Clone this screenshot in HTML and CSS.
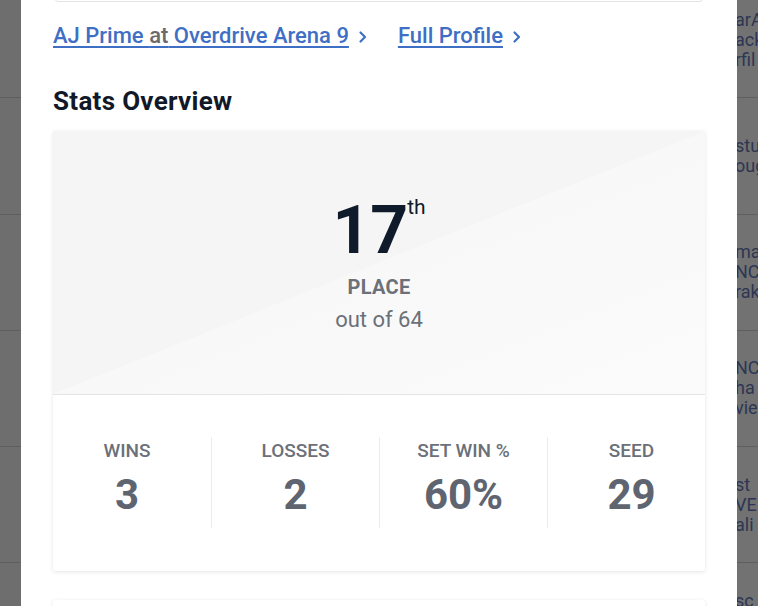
FILE: index.html
```html
<!DOCTYPE html>
<html>
<head>
<meta charset="utf-8">
<link rel="stylesheet" href="styles.css">
</head>
<body>
<div class="screen">
  <div class="side side-left">
    <div class="side-row"></div>
    <div class="side-row"></div>
    <div class="side-row"></div>
    <div class="side-row"></div>
    <div class="side-row"></div>
    <div class="side-row"></div>
  </div>
  <main class="panel">
    <div class="top-box"></div>
    <div class="links">
      <a class="link" href="#">AJ Prime <span class="muted">at</span> Overdrive Arena 9</a>
      <span class="chev">
        <svg width="10" height="14" viewBox="0 0 10 14"><path d="M2.5 2.5 L7 7 L2.5 11.5" fill="none" stroke="currentColor" stroke-width="2.2" stroke-linecap="round" stroke-linejoin="round"/></svg>
      </span>
      <a class="link link-profile" href="#">Full Profile</a>
      <span class="chev">
        <svg width="10" height="14" viewBox="0 0 10 14"><path d="M2.5 2.5 L7 7 L2.5 11.5" fill="none" stroke="currentColor" stroke-width="2.2" stroke-linecap="round" stroke-linejoin="round"/></svg>
      </span>
    </div>
    <h2 class="section-title">Stats Overview</h2>
    <section class="card">
      <div class="place">
        <div class="place-num"><span class="num">17</span><span class="suffix">th</span></div>
        <div class="place-label">PLACE</div>
        <div class="place-of">out of 64</div>
      </div>
      <div class="stats">
        <div class="stat">
          <div class="stat-label">WINS</div>
          <div class="stat-value">3</div>
        </div>
        <div class="stat">
          <div class="stat-label">LOSSES</div>
          <div class="stat-value">2</div>
        </div>
        <div class="stat">
          <div class="stat-label">SET WIN %</div>
          <div class="stat-value">60%</div>
        </div>
        <div class="stat">
          <div class="stat-label">SEED</div>
          <div class="stat-value">29</div>
        </div>
      </div>
    </section>
    <div class="card next-card"></div>
  </main>
  <div class="side side-right">
    <div class="side-row"><span>arAl</span><span>ack</span><span>rfil</span></div>
    <div class="side-row"><span>stu</span><span>oug</span></div>
    <div class="side-row"><span>ma</span><span>NC</span><span>rak</span></div>
    <div class="side-row"><span>NC</span><span>ha</span><span>vie</span></div>
    <div class="side-row"><span>st</span><span>VE</span><span>ali</span></div>
    <div class="side-row"><span>sc</span><span>ol</span><span>ne</span></div>
  </div>
</div>
</body>
</html>
```

FILE: styles.css
```css
* { box-sizing: border-box; }
html, body {
  margin: 0;
  padding: 0;
  width: 758px;
  height: 606px;
  overflow: hidden;
  font-family: Roboto, "Liberation Sans", Arial, sans-serif;
  background: #707070;
}
.screen {
  display: flex;
  width: 758px;
  height: 606px;
  overflow: hidden;
}
.side {
  width: 21px;
  flex: 0 0 21px;
  overflow: hidden;
  background: #6e6e6e;
}
.side-left .side-row,
.side-right .side-row {
  height: 116.25px;
  border-bottom: 1px solid #5f5f5f;
  display: flex;
  flex-direction: column;
  justify-content: center;
}
.side .side-row:first-child { margin-top: -18px; }
.side-right { background: #727272; flex-basis: 21px; }
.side-right .side-row span {
  display: block;
  font-size: 18px;
  line-height: 20px;
  color: #2d3652;
  white-space: nowrap;
  margin-left: -2px;
}
.panel {
  flex: 0 0 716px;
  width: 716px;
  background: #ffffff;
  padding: 0 32px;
  overflow: hidden;
}
.top-box {
  height: 40px;
  margin-top: -38px;
  border: 1px solid #e3e3e3;
  border-radius: 6px;
}
.links {
  display: flex;
  align-items: center;
  margin-top: 22px;
  height: 24px;
  line-height: 24px;
}
.link {
  font-size: 22px;
  font-weight: 500;
  color: #3f6fc4;
  text-decoration: underline;
  text-underline-offset: 3px;
  text-decoration-thickness: 1.5px;
}
.muted { color: #6b6b6b; }
.chev {
  display: inline-flex;
  color: #3f6fc4;
  margin-left: 9px;
  margin-top: 1px;
}
.link-profile { margin-left: 30px; }
.section-title {
  margin: 38px 0 0 0;
  font-size: 26px;
  line-height: 30px;
  font-weight: 700;
  color: #111827;
  letter-spacing: 0.3px;
}
.card {
  margin-top: 15px;
  background: #ffffff;
  border-radius: 2px;
  box-shadow: 0 1px 4px rgba(0, 0, 0, 0.10), 0 0 1px rgba(0, 0, 0, 0.06);
}
.place {
  height: 264px;
  padding-top: 67px;
  border-bottom: 1px solid #e4e4e4;
  background: linear-gradient(to bottom right, #f5f5f5 50%, #f8f8f8 50%, #fbfbfb 100%);
  text-align: center;
}
.place-num {
  display: flex;
  justify-content: center;
  align-items: flex-start;
  color: #0f1a2b;
}
.num {
  font-size: 66px;
  line-height: 66px;
  font-weight: 700;
}
.suffix {
  font-size: 21px;
  line-height: 20px;
  margin-left: -1px;
  margin-top: -1px;
}
.place-label {
  margin-top: 11px;
  font-size: 20px;
  line-height: 24px;
  font-weight: 700;
  color: #6b7079;
  letter-spacing: 0.3px;
}
.place-of {
  margin-top: 9px;
  font-size: 22px;
  line-height: 24px;
  color: #6b7079;
}
.stats {
  display: grid;
  grid-template-columns: repeat(4, 1fr);
  margin: 0 -10px;
  padding: 42px 0 43px;
}
.stat {
  text-align: center;
  padding: 3px 0 9px;
}
.stat + .stat { border-left: 1px solid #ececec; }
.stat-label {
  font-size: 19px;
  line-height: 22px;
  font-weight: 500;
  color: #6b7079;
}
.stat-value {
  margin-top: 9px;
  font-size: 42px;
  line-height: 48px;
  font-weight: 700;
  color: #5e6570;
}
.next-card {
  margin-top: 29px;
  height: 60px;
}
```
